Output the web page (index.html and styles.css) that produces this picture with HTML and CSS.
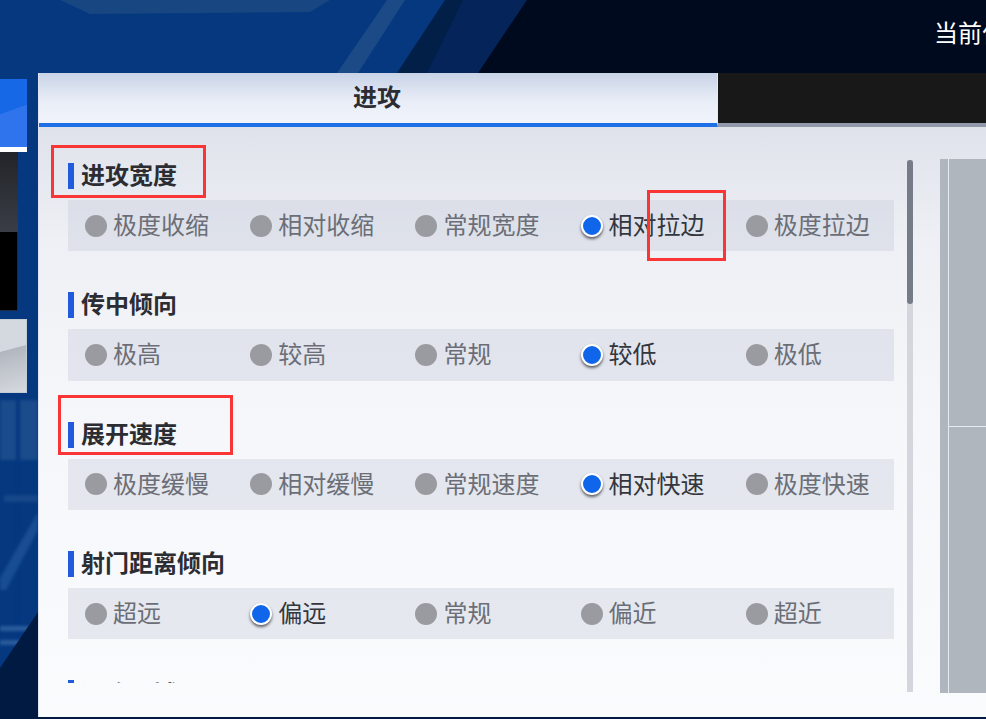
FILE: index.html
```html
<!DOCTYPE html>
<html lang="zh-CN">
<head>
    <meta charset="UTF-8">
    <title>战术设置</title>
    <link rel="stylesheet" href="styles.css">
</head>
<body>
<div class="page">
    <svg class="bg" width="986" height="719" viewBox="0 0 986 719">
        <rect width="986" height="719" fill="#05387f"/>
        <polygon points="60,0 330,0 310,12 90,14" fill="#174681"/>
        <polygon points="387,0 405,0 358,73 337,73" fill="#1c4a86"/>
        <polygon points="445,0 986,0 986,73 397,73" fill="#021f48"/>
        <polygon points="463,0 986,0 986,73 427,73" fill="#04245a"/>
        <polygon points="527,0 986,0 986,73 478,73" fill="#000a1f"/>
        <g class="bg-soft">
            <rect x="0" y="400" width="38" height="60" fill="#1a4b8a"/>
            <rect x="16" y="400" width="4" height="319" fill="#04377f"/>
            <rect x="4" y="495" width="34" height="7" fill="#164789"/>
            <polygon points="38,512 38,530 6,590 0,590 0,578" fill="#184d94"/>
            <rect x="0" y="626" width="38" height="5" fill="#2a5c9c"/>
            <rect x="0" y="640" width="38" height="5" fill="#2a5c9c"/>
        </g>
        <polygon points="38,612 986,612 986,719 0,719 0,668" fill="#011a42"/>
    </svg>

    <div class="topbar">
        <div class="status">当前位置</div>
    </div>

    <div class="main">
        <div class="side">
            <div class="tile tile-blue"></div>
            <div class="tile tile-grey"></div>
            <div class="tile tile-black"></div>
            <div class="tile tile-light"></div>
        </div>

        <div class="panel">
            <div class="tabs">
                <div class="tab tab-on">进攻</div>
                <div class="tab tab-off"></div>
            </div>
            <div class="body">
                <div class="list">
                    <div class="group">
                        <div class="title">进攻宽度</div>
                        <div class="row">
                            <div class="opt"><i class="dot"></i><span>极度收缩</span></div>
                            <div class="opt"><i class="dot"></i><span>相对收缩</span></div>
                            <div class="opt"><i class="dot"></i><span>常规宽度</span></div>
                            <div class="opt on"><i class="dot"></i><span>相对拉边</span></div>
                            <div class="opt"><i class="dot"></i><span>极度拉边</span></div>
                        </div>
                    </div>
                    <div class="group">
                        <div class="title">传中倾向</div>
                        <div class="row">
                            <div class="opt"><i class="dot"></i><span>极高</span></div>
                            <div class="opt"><i class="dot"></i><span>较高</span></div>
                            <div class="opt"><i class="dot"></i><span>常规</span></div>
                            <div class="opt on"><i class="dot"></i><span>较低</span></div>
                            <div class="opt"><i class="dot"></i><span>极低</span></div>
                        </div>
                    </div>
                    <div class="group">
                        <div class="title">展开速度</div>
                        <div class="row">
                            <div class="opt"><i class="dot"></i><span>极度缓慢</span></div>
                            <div class="opt"><i class="dot"></i><span>相对缓慢</span></div>
                            <div class="opt"><i class="dot"></i><span>常规速度</span></div>
                            <div class="opt on"><i class="dot"></i><span>相对快速</span></div>
                            <div class="opt"><i class="dot"></i><span>极度快速</span></div>
                        </div>
                    </div>
                    <div class="group">
                        <div class="title">射门距离倾向</div>
                        <div class="row">
                            <div class="opt"><i class="dot"></i><span>超远</span></div>
                            <div class="opt on"><i class="dot"></i><span>偏远</span></div>
                            <div class="opt"><i class="dot"></i><span>常规</span></div>
                            <div class="opt"><i class="dot"></i><span>偏近</span></div>
                            <div class="opt"><i class="dot"></i><span>超近</span></div>
                        </div>
                    </div>
                    <div class="group">
                        <div class="title title-cut">进攻区域</div>
                    </div>
                </div>
                <div class="scrollbar"><div class="thumb"></div></div>
                <div class="pitch">
                    <div class="strip"></div>
                    <div class="cells">
                        <div class="cell cell-top"></div>
                        <div class="cell"></div>
                    </div>
                </div>
            </div>
        </div>
    </div>

    <div class="mark mark-1"></div>
    <div class="mark mark-2"></div>
    <div class="mark mark-3"></div>
</div>
</body>
</html>
```

FILE: styles.css
```css
* {
    margin: 0;
    padding: 0;
    box-sizing: border-box;
}
body {
    font-family: "Noto Sans CJK SC", "Liberation Sans", sans-serif;
    background-color: #000a1f;
}
.page {
    position: relative;
    width: 986px;
    height: 719px;
    overflow: hidden;
}
.bg {
    position: absolute;
    top: 0;
    left: 0;
}
.bg-soft {
    filter: blur(1.5px);
}

/* top bar */
.topbar {
    position: relative;
    display: flex;
    height: 73px;
}
.status {
    margin-left: auto;
    margin-top: 14px;
    width: 52px;
    height: 36px;
    overflow: hidden;
    white-space: nowrap;
    font-size: 24px;
    line-height: 36px;
    color: #fff;
}

.main {
    position: relative;
    display: flex;
}

/* left column */
.side {
    width: 38px;
    padding-top: 6px;
}
.tile {
    width: 18px;
    height: 80px;
}
.tile-blue {
    width: 27px;
    height: 73px;
    background: linear-gradient(160deg, #1668e6 45%, #2f74ec 46%);
    border-bottom: 5px solid #fff;
}
.tile-grey {
    background: linear-gradient(#222429, #3a3d45);
}
.tile-black {
    height: 79px;
    background-color: #000;
    border-right: 1px solid #1c2a44;
    border-bottom: 1px solid #1c2a44;
}
.tile-light {
    width: 27px;
    height: 74px;
    margin-top: 8px;
    background: linear-gradient(165deg, #d4d8df 40%, #b2b7bf 41%, #d6d9de);
    border: 1px solid #c6ccd6;
    border-left: none;
}

/* panel */
.panel {
    width: 948px;
    height: 644px;
    background: linear-gradient(#d8dce5, #eef0f5 170px, #f6f7fa 350px, #fafbfd);
    border-left: 1px solid #dfe4ee;
}
.tabs {
    display: flex;
    height: 54px;
}
.tab {
    height: 54px;
    font-size: 24px;
    font-weight: bold;
    line-height: 45px;
    text-align: center;
    color: #2b2d33;
}
.tab-on {
    width: 679px;
    padding-right: 2px;
    background: linear-gradient(#c8d3e7, #e9edf7 28px, #f1f4fb);
    border-bottom: 4px solid #1f6fe6;
    border-right: 1px solid #e6eaf3;
}
.tab-off {
    flex: 1;
    background-color: #181818;
    border-bottom: 4px solid #9299ab;
}

.body {
    display: flex;
    align-items: flex-start;
}
.list {
    width: 868px;
    height: 556px;
    padding: 36px 0 0 29px;
    overflow: hidden;
}
.group {
    margin-bottom: 41px;
}
.title {
    height: 26px;
    margin-bottom: 11px;
    padding-left: 7px;
    border-left: 6px solid #1f5bdc;
    font-size: 24px;
    font-weight: bold;
    line-height: 22px;
    color: #2b2d33;
}
/* last title sits under the fold, only its top edge shows */
.title-cut {
    line-height: 25px;
}
.row {
    display: grid;
    grid-template-columns: repeat(5, 1fr);
    width: 826px;
    height: 51.33px;
    background-color: rgba(200, 205, 220, 0.4);
}
.opt {
    display: flex;
    align-items: center;
    padding-left: 17px;
    font-size: 24px;
    color: #6b6e76;
}
.opt span {
    margin-bottom: 4px;
}
.dot {
    flex: none;
    width: 22px;
    height: 22px;
    margin-right: 6px;
    border-radius: 50%;
    background-color: #9a9ba0;
}
.opt.on {
    color: #33363d;
}
.opt.on .dot {
    background-color: #0f66ea;
    border: 2px solid #fff;
    box-shadow: 0 2px 3px rgba(0, 0, 0, 0.6);
}

/* scrollbar */
.scrollbar {
    width: 6px;
    height: 532px;
    margin-top: 33px;
    background-color: #d3d6dc;
}
.thumb {
    height: 144px;
    border-radius: 3px;
    background-color: #767b88;
}

/* right column */
.pitch {
    display: flex;
    width: 46px;
    height: 534px;
    margin: 32px 0 0 27px;
}
.strip {
    width: 8px;
    background-color: #b0b6bd;
}
.cells {
    flex: 1;
    border-left: 1px solid #e8eaee;
    background-color: #b0b6bd;
}
.cell-top {
    height: 268px;
    border-bottom: 1px solid #e8eaee;
}

/* red annotation boxes */
.mark {
    position: absolute;
    border: 3px solid #f93535;
}
.mark-1 {
    left: 51px;
    top: 145px;
    width: 155px;
    height: 53px;
}
.mark-2 {
    left: 647px;
    top: 190px;
    width: 79px;
    height: 71px;
}
.mark-3 {
    left: 58px;
    top: 395px;
    width: 175px;
    height: 60px;
}
```
